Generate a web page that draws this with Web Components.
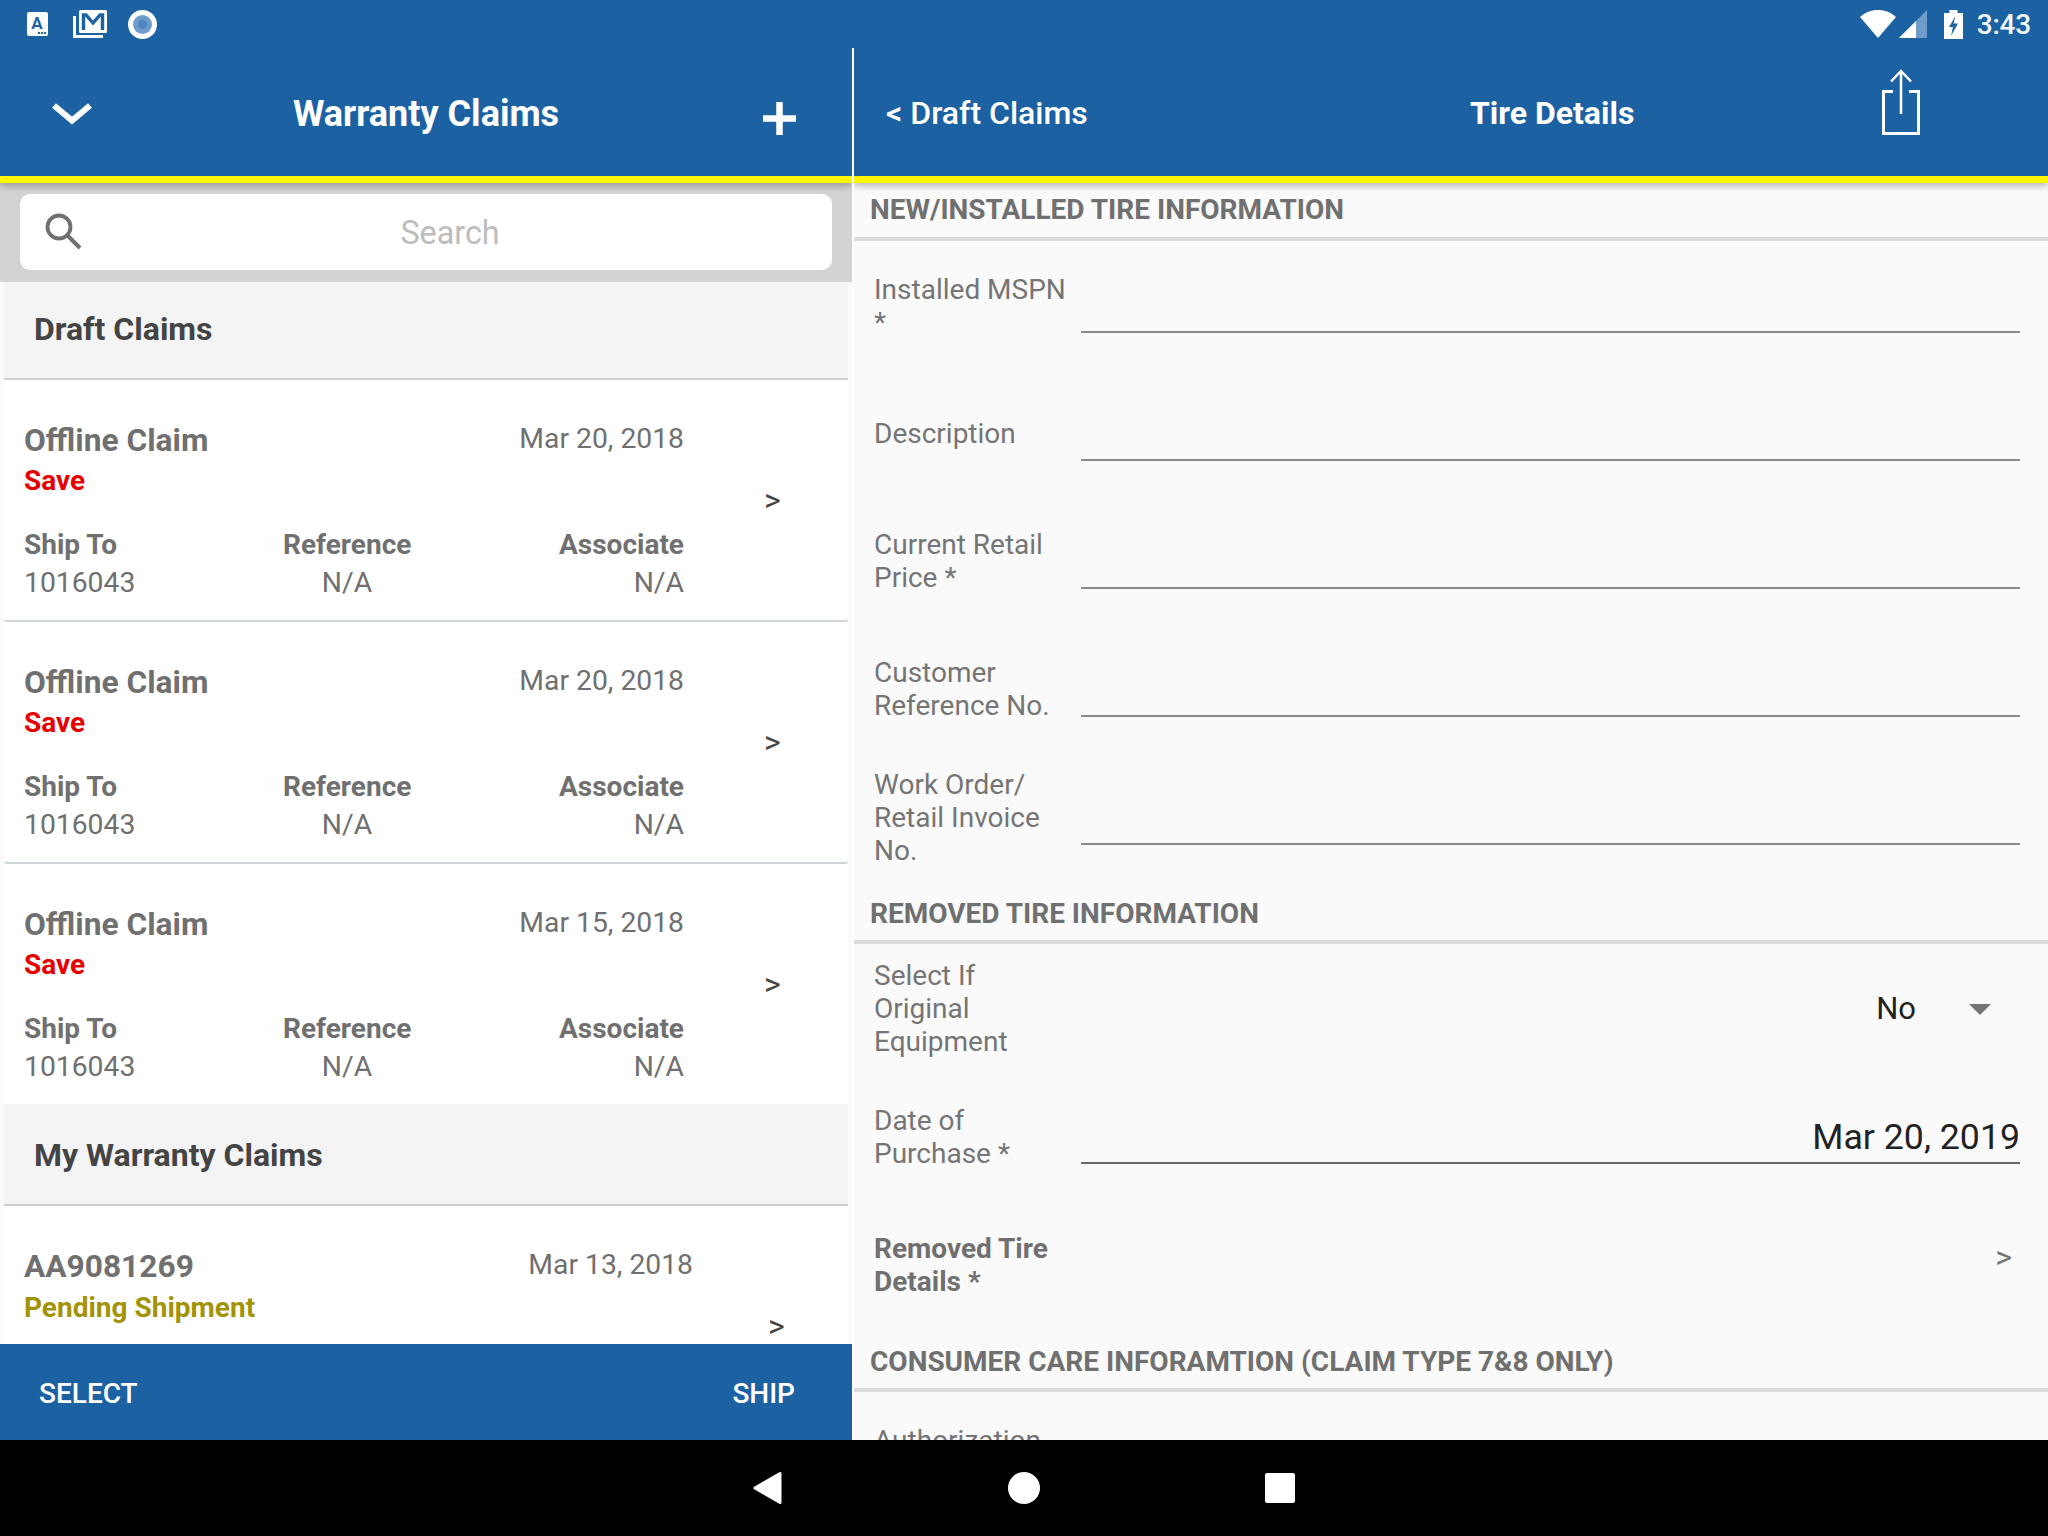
<!DOCTYPE html>
<html>
<head>
<meta charset="utf-8">
<title>Warranty Claims</title>
<style>
  html, body { margin: 0; padding: 0; background: #000; }
  body { font-family: Roboto, "Liberation Sans", sans-serif; }
</style>
</head>
<body>
<warranty-app></warranty-app>

<script>
// ── Helpers ─────────────────────────────────────────────────────────────
function shadow(el, html) {
    el.attachShadow({ mode: 'open' }).innerHTML = html;
}

// ── Android status bar ──────────────────────────────────────────────────
class StatusBar extends HTMLElement {
    constructor() {
        super();
        shadow(this, `
            <style>
                :host { display:flex; align-items:center; height:48px; background:#1c62a3; color:#fff; }
                svg { display:block; flex:none; }
                .time { font-size:28px; font-weight:500; margin:0 17px 0 14px; color:#f4f7fa; letter-spacing:-.2px; }
                .left { display:flex; align-items:center; padding-left:27px; }
                .right { display:flex; align-items:center; margin-left:auto; }
            </style>
            <div class="left">
                <svg width="21" height="24" viewBox="0 0 21 24">
                    <rect width="21" height="24" rx="2" fill="#fff"/>
                    <text x="10" y="16.5" font-family="Roboto" font-size="17" font-weight="700" fill="#1c62a3" text-anchor="middle">A</text>
                    <rect x="11" y="20" width="2" height="2" fill="#1c62a3"/><rect x="14" y="20" width="2" height="2" fill="#1c62a3"/><rect x="17" y="20" width="2" height="2" fill="#1c62a3"/>
                </svg>
                <svg style="margin-left:25px" width="34" height="28" viewBox="0 0 34 28">
                    <path d="M1.5 6v20.5H30" fill="none" stroke="#fff" stroke-width="3"/>
                    <rect x="6" y="0" width="28" height="23" rx="1.5" fill="#fff"/>
                    <path d="M10.5 20V5h2.5L20 13l7-8h2.500v15" fill="none" stroke="#1c62a3" stroke-width="3.400"/>
                </svg>
                <svg style="margin-left:21px" width="29" height="29" viewBox="0 0 29 29">
                    <circle cx="14.5" cy="14.5" r="14.5" fill="#fff"/>
                    <circle cx="14.5" cy="14.5" r="9.500" fill="#6f9ccb"/>
                    <circle cx="14.500" cy="14.500" r="4.500" fill="#4d86be"/>
                </svg>
            </div>
            <div class="right">
                <svg width="36" height="28" viewBox="0 0 36 28">
                    <path d="M0 7C5 2.500 11 0 18 0S31 2.500 36 7L18 28z" fill="#fff"/>
                </svg>
                <svg style="margin-left:3px" width="28" height="28" viewBox="0 0 28 28">
                    <path d="M0 28L28 0v28z" fill="#6f9ccb"/>
                    <path d="M0 28L17 11v17z" fill="#fff"/>
                </svg>
                <svg style="margin-left:17px" width="19" height="29" viewBox="0 0 19 29">
                    <path d="M5.500 0h8v3H19v26H0V3h5.500z" fill="#fff"/>
                    <path d="M11.500 6L5 17h4l-2 9 7-12.500h-4.500z" fill="#1c62a3"/>
                </svg>
                <span class="time">3:43</span>
            </div>`);
    }
}

class TitleBar extends HTMLElement {
    constructor() {
        super();
        shadow(this, `
            <style>
                :host { display:block; position:relative; z-index:2; height:128px; background:#1c62a3; color:#fff;
                        border-bottom:7px solid #fbf700; box-shadow:0 3px 7px rgba(0,0,0,.28); }
            </style>
            <slot></slot>`);
    }
}

class ClaimsHeader extends HTMLElement {
    constructor() {
        super();
        shadow(this, `
            <style>
                :host { display:flex; align-items:center; height:128px; }
                svg { display:block; flex:none; }
                .title { position:absolute; left:0; right:0; text-align:center; top:44px; line-height:44px;
                         font-size:36px; font-weight:700; }
            </style>
            <svg style="margin-left:50px;margin-top:4px" width="44" height="24" viewBox="0 0 44 24">
                <path d="M4 3.500l18 15L40 3.500" fill="none" stroke="#fff" stroke-width="6"/>
            </svg>
            <span class="title">Warranty Claims</span>
            <svg style="margin-left:669px;margin-top:12px" width="33" height="33" viewBox="0 0 33 33">
                <path d="M16.500 0v33M0 16.500h33" stroke="#fff" stroke-width="6.500"/>
            </svg>`);
    }
}

class DetailHeader extends HTMLElement {
    constructor() {
        super();
        shadow(this, `
            <style>
                :host { display:flex; align-items:center; height:128px; position:relative; }
                svg { display:block; flex:none; }
                .back { margin-left:32px; font-size:32px; font-weight:500; margin-top:2px; }
                .title { position:absolute; left:616px; top:43px; line-height:44px; font-size:32px; font-weight:700; }
                svg { position:absolute; left:1028px; top:21px; }
            </style>
            <span class="back">&lt; Draft Claims</span>
            <span class="title">Tire Details</span>
            <svg width="38" height="66" viewBox="0 0 38 66">
                <path d="M11 22.500H1.500v42h35v-42H27" fill="none" stroke="#fff" stroke-width="3"/>
                <path d="M19 2v43M9 12.500L19 2l10 10.500" fill="none" stroke="#fff" stroke-width="2.500"/>
            </svg>`);
    }
}

// ── Search band ─────────────────────────────────────────────────────────
class SearchBox extends HTMLElement {
    constructor() {
        super();
        shadow(this, `
            <style>
                :host { display:block; height:99px; padding:11px 20px 12px; box-sizing:border-box; background:#d3d3d3; }
                .box { position:relative; display:flex; align-items:center; height:76px; background:#fff; border-radius:10px; }
                svg { display:block; margin-left:25px; margin-top:-2px; }
                .ph { position:absolute; left:0; right:0; top:20px; text-align:center; font-size:32.300px; color:#bdbdbd; transform:translateX(24px); }
            </style>
            <div class="box">
                <svg width="37" height="37" viewBox="0 0 37 37">
                    <circle cx="14" cy="14" r="11.500" fill="none" stroke="#707070" stroke-width="3.800"/>
                    <path d="M22.500 22.500L35 35" stroke="#707070" stroke-width="4"/>
                </svg>
                <span class="ph">Search</span>
            </div>`);
    }
}

// ── Grey list section heading ───────────────────────────────────────────
class ListSection extends HTMLElement {
    constructor() {
        super();
        shadow(this, `
            <style>
                :host { display:block; box-sizing:border-box; height:98px; margin:0 4px; padding:28px 0 0 30px;
                        background:#f4f4f4; border-bottom:2px solid #cfcfcf; }
                :host([tall]) { height:102px; padding-top:32px; }
                span { display:block; line-height:38px; font-size:32px; font-weight:700; color:#444; }
            </style>
            <span><slot></slot></span>`);
    }
}

// ── One claim in the list ───────────────────────────────────────────────
class ClaimCard extends HTMLElement {
    constructor() {
        super();
        const warn = this.getAttribute('tone') === 'pending';
        const wide = warn ? 9 : 0;
        const meta = this.hasAttribute('ship') ? `
            <div class="meta">
                <div><b>Ship To</b><span>${this.getAttribute('ship')}</span></div>
                <div class="c"><b>Reference</b><span>N/A</span></div>
                <div class="r"><b>Associate</b><span>N/A</span></div>
            </div>` : '';
        shadow(this, `
            <style>
                :host { display:flex; align-items:center; box-sizing:border-box; height:242px; margin:0 4px; padding-left:20px;
                        background:#fff; border-bottom:2px solid #cdd4da; border-radius:0 0 3px 3px; flex:none; }
                :host([last]) { height:240px; border-bottom:none; }
                .main { align-self:flex-start; flex:none; width:${660 + wide}px; padding-top:41px; color:#707070; }
                .top { display:flex; justify-content:space-between; }
                .name { line-height:40px; font-size:31.700px; font-weight:700; }
                .date { line-height:36px; font-size:28.300px; }
                .status { line-height:36px; margin-top:${warn ? 3 : 2}px; font-size:28px; font-weight:700; color:${warn ? '#a39306' : '#e60000'}; }
                .meta { display:grid; grid-template-columns:259px 128px 273px; margin-top:28px; font-size:28px; }
                .meta b { display:block; line-height:36px; font-weight:700; }
                .meta span { display:block; line-height:36px; margin-top:2px; font-size:28.300px; }
                .c { text-align:center; }
                .r { text-align:right; }
                .go { margin-left:${80 - wide + (warn ? 4 : 0)}px; font-size:32px; color:#444; font-weight:400; }
            </style>
            <div class="main">
                <div class="top"><span class="name">${this.getAttribute('name')}</span><span class="date">${this.getAttribute('date')}</span></div>
                <div class="status">${this.getAttribute('status')}</div>
                ${meta}
            </div>
            <span class="go">&gt;</span>`);
    }
}

class ActionBar extends HTMLElement {
    constructor() {
        super();
        shadow(this, `
            <style>
                :host { display:flex; justify-content:space-between; align-items:center; flex:none; height:96px; box-sizing:border-box;
                        padding:2px 57px 0 39px; background:#1c62a3; color:#fff; font-size:28px; font-weight:500; position:relative; z-index:1; }
            </style>
            <span>SELECT</span><span>SHIP</span>`);
    }
}

// ── Form bits on the right ──────────────────────────────────────────────
class FormSection extends HTMLElement {
    constructor() {
        super();
        shadow(this, `
            <style>
                :host { display:block; box-sizing:border-box; padding:var(--top,26px) 0 var(--bottom,8px) 17px; border-bottom:4px solid #dcdcdc; }
                span { display:block; line-height:36px; font-size:28px; font-weight:700; color:#707070; }
            </style>
            <span><slot></slot></span>`);
    }
}

class FormRow extends HTMLElement {
    constructor() {
        super();
        shadow(this, `
            <style>
                :host { display:grid; grid-template-columns:207px 939px; box-sizing:border-box; padding-left:21px;
                        height:var(--h); color:#757575; font-size:28px; }
                .label { width:196px; padding-top:var(--lt); line-height:33px; }
                :host([strong]) .label { font-weight:700; color:#707070; }
                .line { box-sizing:border-box; height:calc(var(--ul, 0px) + 2px); position:relative; border-bottom:var(--line, 2px solid #8a8a8a); }
                .line ::slotted(*) { position:absolute; right:0; }
            </style>
            <div class="label"><slot name="label"></slot></div>
            <div class="line"><slot></slot></div>`);
    }
}

class PickValue extends HTMLElement {
    constructor() {
        super();
        shadow(this, `
            <style>
                :host { display:flex; align-items:center; color:#222; font-size:31px; }
                i { display:block; width:0; height:0; margin:0 29px 0 53px; border:11px solid transparent; border-top:11px solid #757575; border-bottom:none; }
            </style>
            <slot></slot><i></i>`);
    }
}

// ── Back / home / recents ───────────────────────────────────────────────
class NavBar extends HTMLElement {
    constructor() {
        super();
        shadow(this, `
            <style>
                :host { display:flex; justify-content:center; align-items:center; height:96px; background:#000; }
                svg { display:block; }
            </style>
            <svg width="30" height="34" viewBox="0 0 30 34" style="margin-right:225px;margin-left:-1px;">
                <path d="M2 17L27 2.500v29z" fill="#fff" stroke="#fff" stroke-width="3" stroke-linejoin="round"/>
            </svg>
            <svg width="32" height="32" viewBox="0 0 32 32"><circle cx="16" cy="16" r="16" fill="#fff"/></svg>
            <svg width="30" height="30" viewBox="0 0 30 30" style="margin-left:225px;">
                <rect width="30" height="30" rx="2" fill="#fff"/>
            </svg>`);
    }
}

// ── Page ────────────────────────────────────────────────────────────────
class WarrantyApp extends HTMLElement {
    constructor() {
        super();
        shadow(this, `
            <style>
                :host { display:block; width:2048px; height:1536px; overflow:hidden; font-family:Roboto,"Liberation Sans",sans-serif; }
                .panes { display:grid; grid-template-columns:852px 1196px; height:1392px; }
                .pane { display:flex; flex-direction:column; min-height:0; overflow:hidden; background:#fafafa; }
                .list { flex:1; min-height:0; overflow:hidden; }
                .detail { position:relative; border-left:2px solid #fff; box-sizing:border-box; }
                .form { flex:1; min-height:0; overflow:hidden; border-left:1px solid #dedede; margin-left:-2px; }
                form-row span[slot] { display:block; }
                .v { line-height:44px; top:var(--vt); }
                .date { font-size:35.700px; color:#222; }
                .more { font-size:32px; color:#757575; right:8px !important; }
            </style>
            <status-bar></status-bar>
            <div class="panes">
                <div class="pane">
                    <title-bar><claims-header></claims-header></title-bar>
                    <search-box></search-box>
                    <div class="list">
                        <list-section>Draft Claims</list-section>
                        <claim-card name="Offline Claim" date="Mar 20, 2018" status="Save" ship="1016043"></claim-card>
                        <claim-card name="Offline Claim" date="Mar 20, 2018" status="Save" ship="1016043"></claim-card>
                        <claim-card last name="Offline Claim" date="Mar 15, 2018" status="Save" ship="1016043"></claim-card>
                        <list-section tall>My Warranty Claims</list-section>
                        <claim-card name="AA9081269" date="Mar 13, 2018" status="Pending Shipment" tone="pending"></claim-card>
                    </div>
                    <action-bar></action-bar>
                </div>
                <div class="pane detail">
                    <title-bar><detail-header></detail-header></title-bar>
                    <div class="form">
                        <form-section style="--top:9px;--bottom:9px">NEW/INSTALLED TIRE INFORMATION</form-section>
                        <form-row style="--h:92px;--lt:32px;--ul:90px"><span slot="label">Installed MSPN *</span></form-row>
                        <form-row style="--h:127px;--lt:84px;--ul:126px"><span slot="label">Description</span></form-row>
                        <form-row style="--h:129px;--lt:68px;--ul:127px"><span slot="label">Current Retail Price *</span></form-row>
                        <form-row style="--h:128px;--lt:67px;--ul:126px"><span slot="label">Customer Reference No.</span></form-row>
                        <form-row style="--h:153px;--lt:51px;--ul:126px"><span slot="label">Work Order/ Retail Invoice No.</span></form-row>
                        <form-section>REMOVED TIRE INFORMATION</form-section>
                        <form-row style="--h:126px;--lt:15px;--line:none">
                            <span slot="label">Select If Original Equipment</span>
                            <pick-value class="v" style="--vt:43px">No</pick-value>
                        </form-row>
                        <form-row style="--h:120px;--lt:34px;--ul:92px;--line:2.500px solid #666">
                            <span slot="label">Date of Purchase *</span>
                            <span class="v date" style="--vt:45px">Mar 20, 2019</span>
                        </form-row>
                        <form-row strong style="--h:120px;--lt:42px;--line:none">
                            <span slot="label">Removed Tire Details *</span>
                            <span class="v more" style="--vt:45px">&gt;</span>
                        </form-row>
                        <form-section style="--top:34px;--bottom:8px">CONSUMER CARE INFORAMTION (CLAIM TYPE 7&amp;8 ONLY)</form-section>
                        <form-row style="--h:92px;--lt:32px;--line:none"><span slot="label">Authorization</span></form-row>
                    </div>
                </div>
            </div>
            <nav-bar></nav-bar>`);
    }
}

customElements.define('status-bar', StatusBar);
customElements.define('title-bar', TitleBar);
customElements.define('claims-header', ClaimsHeader);
customElements.define('detail-header', DetailHeader);
customElements.define('search-box', SearchBox);
customElements.define('list-section', ListSection);
customElements.define('claim-card', ClaimCard);
customElements.define('action-bar', ActionBar);
customElements.define('form-section', FormSection);
customElements.define('form-row', FormRow);
customElements.define('pick-value', PickValue);
customElements.define('nav-bar', NavBar);
customElements.define('warranty-app', WarrantyApp);
</script>
</body>
</html>
